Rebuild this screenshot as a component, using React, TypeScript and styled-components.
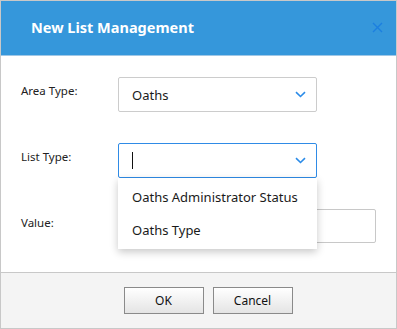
import React from "react";
import styled, { createGlobalStyle } from "styled-components";

const GlobalStyle = createGlobalStyle`
  html, body {
    margin: 0;
    padding: 0;
    background: #ffffff;
  }
  body {
    font-family: "Noto Sans", "Open Sans", sans-serif;
  }
`;

const Dialog = styled.div`
  width: 397px;
  height: 329px;
  box-sizing: border-box;
  border: 1px solid #c8c8c8;
  display: flex;
  flex-direction: column;
  background: #ffffff;
`;

const Header = styled.div`
  height: 54px;
  flex: none;
  background: #3597db;
  border-bottom: 1px solid #9fc7e6;
  display: flex;
  align-items: center;
  justify-content: space-between;
  padding: 0 12px 0 30px;
`;

const Title = styled.div`
  color: #ffffff;
  font-size: 14.5px;
  font-weight: 700;
  margin-top: -2px;
`;

const CloseButton = styled.button`
  border: 0;
  background: transparent;
  padding: 0;
  width: 14px;
  height: 14px;
  display: flex;
  align-items: center;
  justify-content: center;
  margin-top: -1px;
`;

const Body = styled.div`
  flex: 1;
  display: flex;
  flex-direction: column;
  gap: 31px;
  padding: 21px 20px 0 20px;
`;

const Row = styled.div`
  display: grid;
  grid-template-columns: 97px 1fr;
  align-items: start;
  position: relative;
`;

const Label = styled.div`
  font-size: 11.5px;
  color: #222222;
  padding-top: 6px;
`;

const Select = styled.div<{ $focused?: boolean }>`
  width: 199px;
  height: 35px;
  box-sizing: border-box;
  border: 1px solid ${(p) => (p.$focused ? "#2f8be6" : "#cccccc")};
  border-radius: 2px;
  display: flex;
  align-items: center;
  justify-content: space-between;
  padding: 0 10px 0 13px;
  font-size: 13px;
  color: #1a1a1a;
`;

const Caret = styled.span`
  display: inline-block;
  width: 1px;
  height: 17px;
  background: #111111;
`;

const TextInput = styled.div`
  width: 258px;
  height: 34px;
  box-sizing: border-box;
  border: 1px solid #c8c8c8;
  border-radius: 2px;
`;

const Menu = styled.div`
  position: absolute;
  left: 97px;
  top: 35px;
  width: 199px;
  box-sizing: border-box;
  background: #ffffff;
  box-shadow: 0 3px 8px rgba(0, 0, 0, 0.22);
  padding: 2px 0 3px;
  z-index: 2;
`;

const MenuItem = styled.div`
  height: 33px;
  display: flex;
  align-items: center;
  padding-left: 14px;
  font-size: 13px;
  color: #1a1a1a;
`;

const Footer = styled.div`
  height: 56px;
  flex: none;
  box-sizing: border-box;
  border-top: 1px solid #c8c8c8;
  background: #f4f4f4;
  display: flex;
  align-items: center;
  justify-content: center;
  gap: 9px;
  padding-left: 19px;
  padding-bottom: 1px;
`;

const Button = styled.button`
  width: 80px;
  height: 27px;
  box-sizing: border-box;
  border: 1px solid #8a8a8a;
  background: linear-gradient(#ffffff, #e4e4e4);
  font-family: "Noto Sans", "Open Sans", sans-serif;
  font-size: 12px;
  color: #111111;
  padding: 0;
`;

const Chevron = () => (
  <svg width="11" height="7" viewBox="0 0 11 7">
    <path d="M1 1.2 L5.5 5.5 L10 1.2" fill="none" stroke="#2b8be8" strokeWidth="1.6" />
  </svg>
);

const CloseIcon = () => (
  <svg width="11" height="11" viewBox="0 0 11 11">
    <path d="M1 1 L10 10 M10 1 L1 10" stroke="#1c7fe0" strokeWidth="1.4" fill="none" />
  </svg>
);

export default function App() {
  const options = ["Oaths Administrator Status", "Oaths Type"];
  return (
    <>
      <GlobalStyle />
      <Dialog>
        <Header>
          <Title>New List Management</Title>
          <CloseButton>
            <CloseIcon />
          </CloseButton>
        </Header>
        <Body>
          <Row>
            <Label>Area Type:</Label>
            <Select>
              <span>Oaths</span>
              <Chevron />
            </Select>
          </Row>
          <Row>
            <Label>List Type:</Label>
            <Select $focused>
              <Caret />
              <Chevron />
            </Select>
            <Menu>
              {options.map((o) => (
                <MenuItem key={o}>{o}</MenuItem>
              ))}
            </Menu>
          </Row>
          <Row>
            <Label>Value:</Label>
            <TextInput />
          </Row>
        </Body>
        <Footer>
          <Button>OK</Button>
          <Button>Cancel</Button>
        </Footer>
      </Dialog>
    </>
  );
}
